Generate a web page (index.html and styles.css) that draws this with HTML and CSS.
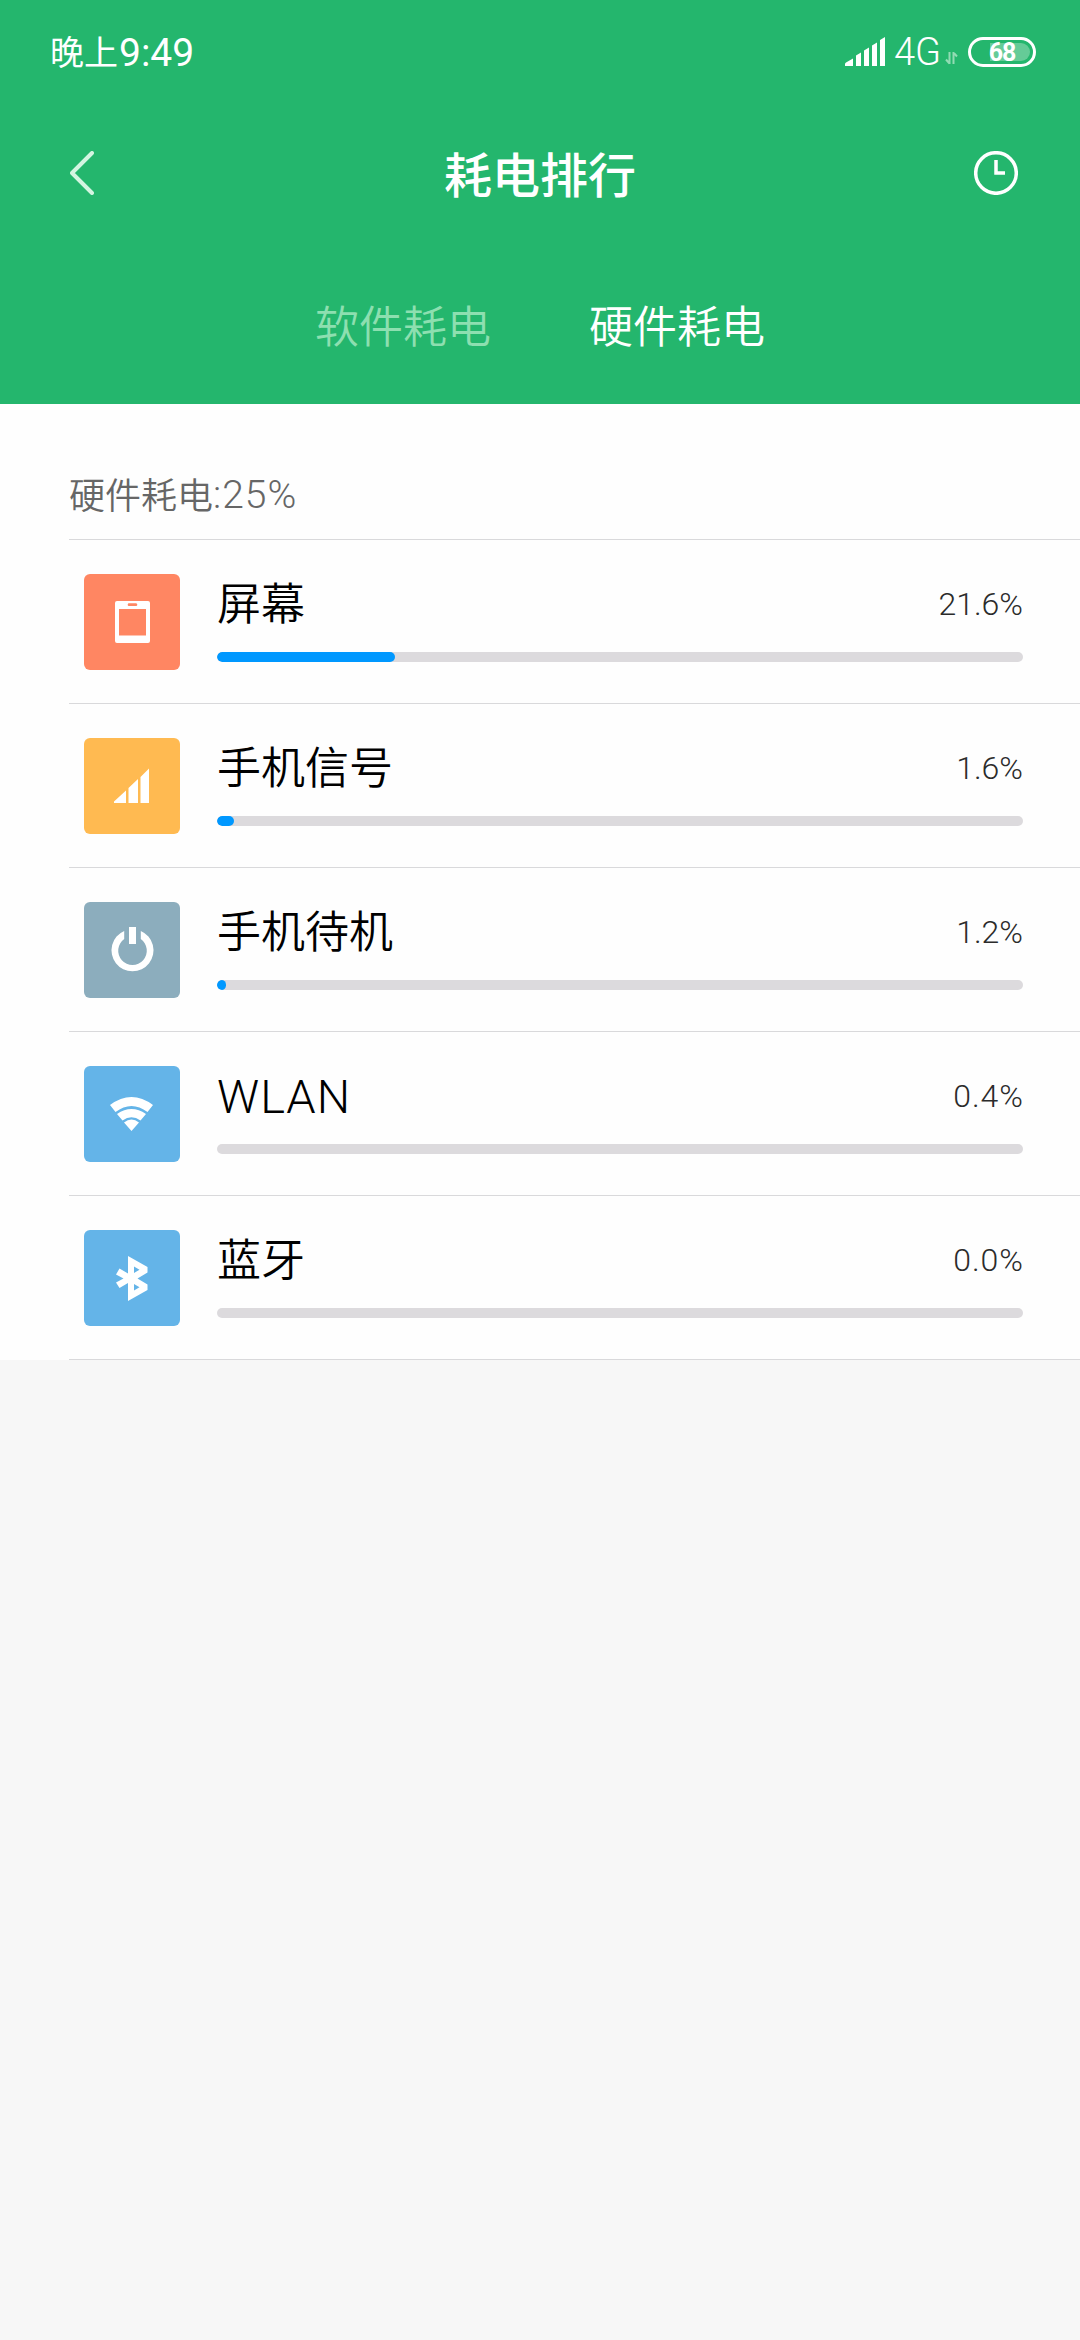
FILE: index.html
```html
<!DOCTYPE html>
<html lang="zh-CN">
<head>
<meta charset="utf-8">
<title>耗电排行</title>
<link rel="stylesheet" href="styles.css">
</head>
<body>
<header class="header">
  <div class="status">
    <div class="clock"><span class="clock-text">晚上</span><span class="clock-num">9:49</span></div>
    <div class="status-icons">
      <svg class="signal" width="41" height="30" viewBox="0 0 41 30"><path d="M0 29V27Q0 26 1 25.500L8 21.500V29ZM11 29V18.500L16 15.500V29ZM19 29V13.500L24 10.500V29ZM27 29V8.500L32 5.500V29ZM35 29V3L40 0V29Z"/></svg>
      <span class="network">4G</span>
      <svg class="data" width="13" height="13" viewBox="0 0 13 13"><path d="M4.500 0V12M4.500 11.500L1 7.500M8.500 12V0M8.500 .5L12 4.500"/></svg>
      <div class="battery"><span class="battery-fill"></span><span class="battery-num">68</span></div>
    </div>
  </div>
  <div class="bar">
    <svg class="back" width="24" height="44" viewBox="0 0 24 44"><path d="M22 2L2 22L22 42"/></svg>
    <h1 class="title">耗电排行</h1>
    <svg class="history" width="44" height="44" viewBox="0 0 44 44"><circle cx="22" cy="22" r="20.300"/><path d="M22 9V22H31"/></svg>
  </div>
  <nav class="tabs"><span class="tab">软件耗电</span><span class="tab tab-active">硬件耗电</span></nav>
</header>
<main class="list">
  <div class="summary"><span class="summary-text">硬件耗电</span><span class="summary-num">:25%</span></div>
  <section class="row">
    <div class="icon icon-screen"><svg width="96" height="96" viewBox="0 0 96 96"><path fill-rule="evenodd" d="M33 27H64Q66 27 66 29V67Q66 69 64 69H33Q31 69 31 67V29Q31 27 33 27ZM35 35V61.500H62V35ZM45 29.300Q43.700 29.300 43.700 30.700T45 32H52Q53.300 32 53.300 30.700T52 29.300Z"/></svg></div>
    <div class="name">屏幕</div><div class="value">21.6%</div>
    <div class="track"><div class="fill" style="width:178px"></div></div>
  </section>
  <section class="row">
    <div class="icon icon-signal"><svg width="96" height="96" viewBox="0 0 96 96"><path d="M30 65V63.500L42 52.500V65ZM44.500 65V50L54 41V65ZM56.500 65V39L65 30.500V65Z"/></svg></div>
    <div class="name">手机信号</div><div class="value">1.6%</div>
    <div class="track"><div class="fill" style="width:17px"></div></div>
  </section>
  <section class="row">
    <div class="icon icon-power"><svg width="96" height="96" viewBox="0 0 96 96"><path d="M45 25H52V42H45Z"/><path d="M40.200 29V37A14.300 14.300 0 1 0 56.800 37V29A21 21 0 1 1 40.200 29Z"/></svg></div>
    <div class="name">手机待机</div><div class="value">1.2%</div>
    <div class="track"><div class="fill" style="width:9px"></div></div>
  </section>
  <section class="row">
    <div class="icon icon-wifi"><svg width="96" height="96" viewBox="0 0 96 96"><path d="M26 39Q47.500 23 69 39L63.500 46Q47.500 34 31.500 46ZM33 48Q47.500 38 62 48L56.500 54.500Q47.500 48 38.500 54.500ZM40 56.500Q47.500 50.500 55 56.500L47.500 65Z"/></svg></div>
    <div class="name name-latin">WLAN</div><div class="value value-wide">0.4%</div>
    <div class="track"></div>
  </section>
  <section class="row">
    <div class="icon icon-bluetooth"><svg width="96" height="96" viewBox="0 0 96 96"><path fill-rule="evenodd" d="M44 26L63.500 37V42.500L53.500 48.500L63.500 54.500V60L44 71V53L35.500 58L32 52.500L39.500 48.500L32 44.500L35.500 38.500L44 43.500ZM50 36.500V43L55.500 39.700ZM50 54V60.500L55.500 57.200Z"/></svg></div>
    <div class="name">蓝牙</div><div class="value value-wide">0.0%</div>
    <div class="track"></div>
  </section>
</main>
</body>
</html>
```

FILE: styles.css
```css
* { box-sizing: border-box; }
body {
  margin: 0;
  min-height: 2340px;
  background: #f7f7f7;
  font-family: "Noto Sans CJK SC", sans-serif;
  font-weight: 350;
}
svg { display: block; flex: none; }
.header { height: 404px; background: #24b66d; color: #fff; }

.status {
  display: flex;
  justify-content: space-between;
  height: 104px;
  padding: 0 44px 0 50px;
}
.clock {
  display: flex;
  align-items: center;
  height: 104px;
  font-size: 34px;
  font-weight: 400;
  white-space: nowrap;
}
.clock-text { padding-bottom: 3px; }
.clock-num { font: 400 39px/1 Roboto, sans-serif; padding-top: 2px; margin-left: 1px; }
.status-icons { display: flex; align-items: center; height: 104px; }
.signal { fill: #fff; margin-right: 8px; }
.network { width: 51px; font: 300 38px/1 Roboto, sans-serif; white-space: nowrap; }
.data { margin: 12px 10px 0 0; fill: none; stroke: #91dbb3; stroke-width: 2; }
.battery {
  position: relative;
  width: 68px;
  height: 30px;
  border: 3px solid #fff;
  border-radius: 15px;
  text-align: center;
}
.battery-fill {
  position: absolute;
  inset: 3px;
  left: 19px;
  border-radius: 0 9px 9px 0;
  background: #65cb97;
}
.battery-num { position: relative; font: 700 25px/25px Roboto, sans-serif; display: block; letter-spacing: -1px; }

.bar {
  display: grid;
  grid-template-columns: 44px 1fr 44px;
  align-items: center;
  height: 138px;
  padding: 0 62px 0 70px;
}
.back { fill: none; stroke: #d3f5e1; stroke-width: 4; stroke-linecap: round; stroke-linejoin: round; }
.history { fill: none; stroke: #fff; stroke-width: 3.500; }
.title { margin: 0; padding: 0 8px 3px 0; text-align: center; font-size: 48px; font-weight: 500; line-height: 70px; }
.tabs { display: flex; justify-content: center; gap: 98px; height: 162px; font-size: 44px; line-height: 165px; }
.tab { color: #8ddfb0; }
.tab-active { color: #fff; }

.list { height: 956px; background: #fefefe; padding-left: 69px; }
.summary {
  display: flex;
  align-items: center;
  height: 136px;
  padding-top: 46px;
  border-bottom: 1px solid #d9d9db;
  color: #666;
  font-size: 36px;
}
.summary-text { padding-bottom: 4px; }
.summary-num { padding-top: 2px; font: 300 39px/1 Roboto, sans-serif; letter-spacing: 1px; }
.row {
  display: grid;
  grid-template-columns: 133px 500px 306px;
  grid-template-rows: 78px 10px;
  height: 164px;
  padding: 34px 0 0 15px;
  border-bottom: 1px solid #d9d9db;
}
.icon { grid-row: 1 / 3; width: 96px; height: 96px; border-radius: 6px; }
.icon svg { fill: #fff; }
.icon-screen { background: #ff8662; }
.icon-signal { background: #ffba51; }
.icon-power { background: #8cadbd; }
.icon-wifi, .icon-bluetooth { background: #64b4e8; }
.name { color: #000; font-size: 44px; line-height: 54px; }
.name-latin { font: 300 47px/61px Roboto, sans-serif; letter-spacing: 1px; }
.value { color: #2b2b2b; text-align: right; font: 300 32px/60px Roboto, sans-serif; }
.value-wide { letter-spacing: 1px; margin-right: -1px; }
.track { grid-column: 2 / 4; height: 10px; border-radius: 5px; background: #dcdadd; overflow: hidden; }
.fill { height: 10px; border-radius: 5px; background: #0098ff; }
```
